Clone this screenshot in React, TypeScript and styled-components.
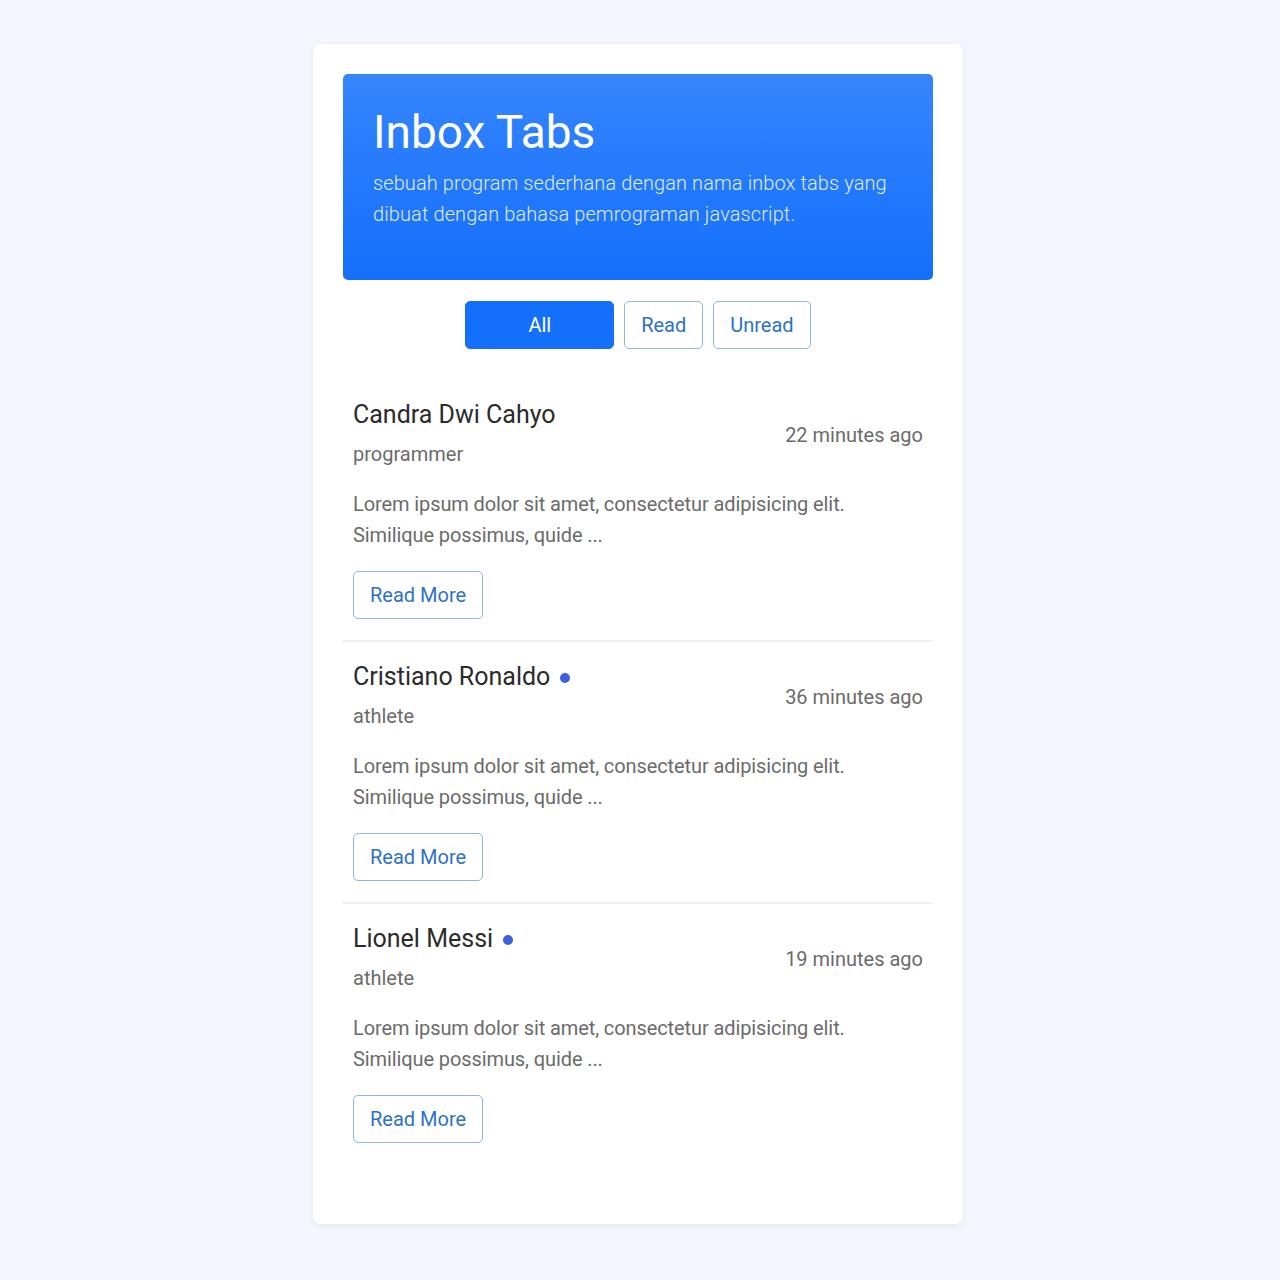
import React from "react";
import styled, { createGlobalStyle } from "styled-components";

const Global = createGlobalStyle`
  html, body {
    margin: 0;
    padding: 0;
    background: #f3f6fd;
    font-family: Roboto, "Liberation Sans", sans-serif;
  }
`;

const Page = styled.div`
  min-height: 1280px;
  display: flex;
  justify-content: center;
  align-items: flex-start;
  padding: 44px 4px 0 0;
  box-sizing: border-box;
`;

const Card = styled.div`
  width: 650px;
  box-sizing: border-box;
  background: #ffffff;
  border-radius: 8px;
  box-shadow: 0 2px 6px rgba(30, 50, 90, 0.08);
  padding: 30px 30px 60px;
`;

const Header = styled.header`
  background: linear-gradient(180deg, #3585fd 0%, #146ffb 100%);
  border-radius: 5px;
  padding: 30px 30px 50px;
  color: #ffffff;
`;

const Title = styled.h1`
  margin: 0 0 8px;
  font-size: 46px;
  font-weight: 400;
  line-height: 56px;
`;

const Subtitle = styled.p`
  margin: 0;
  font-size: 20px;
  font-weight: 300;
  line-height: 31px;
  letter-spacing: 0.1px;
  color: rgba(255, 255, 255, 0.88);
`;

const Tabs = styled.nav`
  display: flex;
  justify-content: center;
  gap: 10px;
  margin: 21px 0 31px;
`;

const Tab = styled.button<{ $active?: boolean; $wide?: boolean }>`
  font-family: inherit;
  font-size: 20px;
  height: 48px;
  box-sizing: border-box;
  padding: 0 ${(p) => (p.$wide ? "62px" : "16px")};
  border-radius: 5px;
  cursor: pointer;
  border: 1px solid ${(p) => (p.$active ? "#146ffb" : "#8db6ea")};
  background: ${(p) => (p.$active ? "#146ffb" : "#ffffff")};
  color: ${(p) => (p.$active ? "#ffffff" : "#2d72c8")};
`;

const List = styled.div`
  display: flex;
  flex-direction: column;
`;

const Item = styled.article<{ $last?: boolean }>`
  padding: 20px 10px 21px;
  border-bottom: ${(p) => (p.$last ? "none" : "2px solid #eef0f3")};
`;

const ItemHead = styled.div`
  display: flex;
  justify-content: space-between;
  align-items: center;
`;

const Who = styled.div`
  display: flex;
  flex-direction: column;
  gap: 10px;
`;

const Name = styled.h2`
  margin: 0;
  font-size: 25px;
  font-weight: 400;
  line-height: 29px;
  color: #2b2b2b;
  display: flex;
  align-items: center;
`;

const Dot = styled.span`
  display: inline-block;
  width: 10px;
  height: 10px;
  border-radius: 50%;
  background: #3d5fe0;
  margin-left: 10px;
  margin-top: 2px;
`;

const Role = styled.span`
  font-size: 20px;
  line-height: 30px;
  color: #6b6b6b;
`;

const Time = styled.span`
  font-size: 20px;
  line-height: 30px;
  color: #6b6b6b;
`;

const Body = styled.p`
  margin: 20px 0 20px;
  font-size: 20px;
  line-height: 31px;
  letter-spacing: -0.1px;
  color: #6b6b6b;
  max-width: 520px;
`;

const ReadMore = styled.button`
  font-family: inherit;
  font-size: 20px;
  height: 48px;
  padding: 0 16px;
  box-sizing: border-box;
  border: 1px solid #8db6ea;
  border-radius: 5px;
  background: #ffffff;
  color: #2d72c8;
  cursor: pointer;
`;

const messages = [
  { name: "Candra Dwi Cahyo", role: "programmer", time: "22 minutes ago", unread: false },
  { name: "Cristiano Ronaldo", role: "athlete", time: "36 minutes ago", unread: true },
  { name: "Lionel Messi", role: "athlete", time: "19 minutes ago", unread: true },
];

export default function App() {
  return (
    <>
      <Global />
      <Page>
        <Card>
          <Header>
            <Title>Inbox Tabs</Title>
            <Subtitle>
              sebuah program sederhana dengan nama inbox tabs yang dibuat dengan bahasa pemrograman javascript.
            </Subtitle>
          </Header>
          <Tabs>
            <Tab $active $wide>All</Tab>
            <Tab>Read</Tab>
            <Tab>Unread</Tab>
          </Tabs>
          <List>
            {messages.map((m, i) => (
              <Item key={m.name} $last={i === messages.length - 1}>
                <ItemHead>
                  <Who>
                    <Name>
                      {m.name}
                      {m.unread && <Dot />}
                    </Name>
                    <Role>{m.role}</Role>
                  </Who>
                  <Time>{m.time}</Time>
                </ItemHead>
                <Body>
                  Lorem ipsum dolor sit amet, consectetur adipisicing elit. Similique possimus, quide ...
                </Body>
                <ReadMore>Read More</ReadMore>
              </Item>
            ))}
          </List>
        </Card>
      </Page>
    </>
  );
}
